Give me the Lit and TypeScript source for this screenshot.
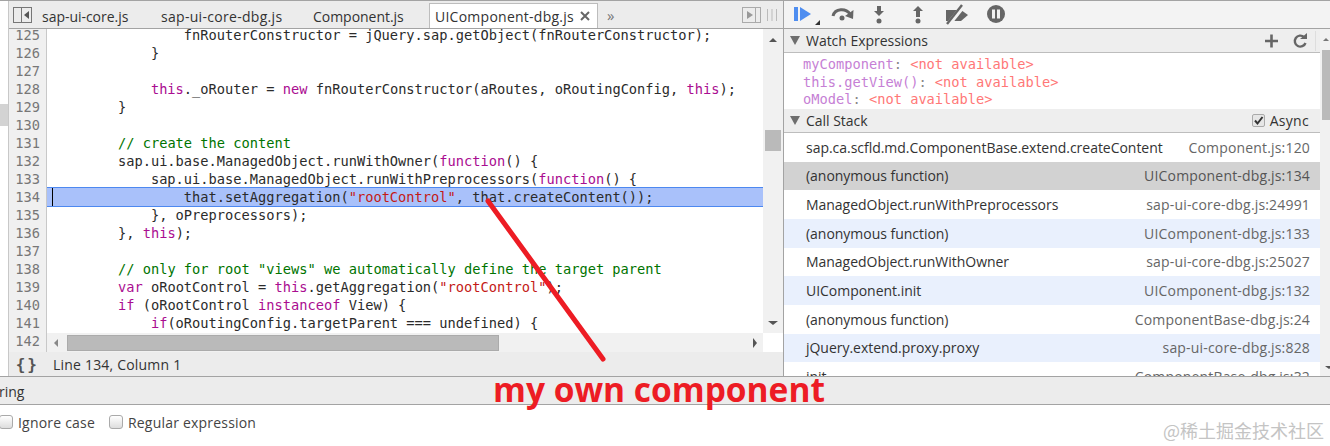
import { LitElement, html, css, svg } from "lit";
import { customElement } from "lit/decorators.js";

type Tok = [string, string?];
const K = "k", S = "s", C = "c";
const lines: Tok[][] = [
  [["                fnRouterConstructor = jQuery.sap.getObject(fnRouterConstructor);"]],
  [["            }"]],
  [[""]],
  [["            "], ["this", K], ["._oRouter = "], ["new", K], [" fnRouterConstructor(aRoutes, oRoutingConfig, "], ["this", K], [");"]],
  [["        }"]],
  [[""]],
  [["        "], ["// create the content", C]],
  [["        sap.ui.base.ManagedObject.runWithOwner("], ["function", K], ["() {"]],
  [["            sap.ui.base.ManagedObject.runWithPreprocessors("], ["function", K], ["() {"]],
  [["                that.setAggregation("], ['"rootControl"', S], [", that.createContent());"]],
  [["            }, oPreprocessors);"]],
  [["        }, "], ["this", K], [");"]],
  [[""]],
  [["        "], ['// only for root "views" we automatically define the target parent', C]],
  [["        "], ["var", K], [" oRootControl = "], ["this", K], [".getAggregation("], ['"rootControl"', S], [");"]],
  [["        "], ["if", K], [" (oRootControl "], ["instanceof", K], [" View) {"]],
  [["            "], ["if", K], ["(oRoutingConfig.targetParent === undefined) {"]],
  [[""]],
];

const stack: [string, string, string][] = [
  ["sap.ca.scfld.md.ComponentBase.extend.createContent", "Component.js:120", ""],
  ["(anonymous function)", "UIComponent-dbg.js:134", "sel"],
  ["ManagedObject.runWithPreprocessors", "sap-ui-core-dbg.js:24991", ""],
  ["(anonymous function)", "UIComponent-dbg.js:133", "alt"],
  ["ManagedObject.runWithOwner", "sap-ui-core-dbg.js:25027", ""],
  ["UIComponent.init", "UIComponent-dbg.js:132", "alt"],
  ["(anonymous function)", "ComponentBase-dbg.js:24", ""],
  ["jQuery.extend.proxy.proxy", "sap-ui-core-dbg.js:828", "alt"],
  ["init", "ComponentBase-dbg.js:32", ""],
];

const watches: [string, string][] = [
  ["myComponent", "<not available>"],
  ["this.getView()", "<not available>"],
  ["oModel", "<not available>"],
];

@customElement("app-root")
export class AppRoot extends LitElement {
  static styles = css`
    :host {
      display: block;
      width: 1330px;
      height: 446px;
      position: relative;
      overflow: hidden;
      background: #fff;
      font-family: "Open Sans", sans-serif;
      font-size: 14px;
      letter-spacing: -0.03px;
      color: #333;
      border-top: 1px solid #a3a3a3;
      box-sizing: border-box;
    }
    .top { display: flex; height: 375px; border-bottom: 1px solid #a3a3a3; box-sizing: content-box; }
    .left { width: 783px; flex: none; display: flex; flex-direction: column; border-right: 1px solid #a3a3a3; }
    .right { flex: 1; min-width: 0; display: flex; flex-direction: column; }

    .sources { flex: 1; min-height: 0; display: flex; }
    .strip { width: 8px; flex: none; border-right: 1px solid #c8c8c8; display: flex; flex-direction: column; }
    .strip i { display: block; height: 22px; margin-top: 103px; background: #d3d3d3; }
    .main { flex: 1; min-width: 0; display: flex; flex-direction: column; }

    .tabbar { height: 27px; flex: none; display: flex; align-items: flex-end; background: #ececec; border-bottom: 1px solid #a3a3a3; position: relative; }
    .tab { height: 25px; line-height: 27px; white-space: nowrap; }
    .tab.active { background: #fff; border: 1px solid #bdbdbd; border-bottom: none; box-sizing: border-box; height: 25px; padding: 0 7px 0 5px; display: flex; align-items: center; width: 169px; margin-left: 24px; justify-content: space-between; letter-spacing: 0.25px; }
    .t1 { margin-left: 33px; width: 119px; }
    .t2 { width: 152px; letter-spacing: 0.3px; }
    .t3 { width: 92px; }
    .tabicon { align-self: center; flex: none; display: block; }
    .lefticon { position: absolute; left: 4px; top: 6px; }
    .chev { margin-left: 9px; align-self: center; color: #777; font-size: 15px; }
    .tabspacer { flex: 1; }
    .barsicon { margin: 0 6px; }

    .editor { flex: 1; min-height: 0; display: flex; }
    .gutter { width: 37px; flex: none; background: #f0f0f0; border-right: 1px solid #c8c8c8; overflow: hidden; color: #777; }
    .codecol { flex: 1; min-width: 0; display: flex; flex-direction: column; }
    .code { height: 304px; flex: none; overflow: hidden; }
    .scrolled { margin-top: -3px; }
    .gutter, .code { font-family: "DejaVu Sans Mono", monospace; font-size: 13.7px; letter-spacing: 0; }
    .num { height: 18px; line-height: 18px; text-align: right; padding-right: 6px; }
    .ln { height: 18px; line-height: 18px; white-space: pre; padding-left: 5px; position: relative; color: #2b2b2b; }
    .ln.cur { background: #a9c1fa; box-shadow: 0 -1px 0 #4d88f0, 0 1px 0 #4d88f0; }
    .caret { position: absolute; left: 5px; top: 0; width: 1px; height: 18px; background: #000; }
    .k { color: #aa0d91; }
    .s { color: #c41a16; }
    .c { color: #007400; }

    .hscroll { flex: 1; background: #f1f1f1; display: flex; align-items: center; position: relative; }
    .harrow-l { width: 0; height: 0; border: 4px solid transparent; border-right: 4px solid #888; border-left: 0; margin-left: 7px; }
    .hthumb { width: 432px; height: 16px; background: #bababa; border: 1px solid #ababab; box-sizing: border-box; margin-left: 9px; }
    .harrow-r { width: 0; height: 0; border: 5px solid transparent; border-left: 4px solid #555; border-right: 0; margin-left: auto; margin-right: 6px; }
    .vcol { width: 20px; flex: none; display: flex; flex-direction: column; }
    .vscroll { height: 304px; background: #f1f1f1; position: relative; display: flex; flex-direction: column; align-items: center; }
    .varrow-u { width: 0; height: 0; border: 4px solid transparent; border-bottom: 4px solid #555; border-top: 0; margin-top: 9px; }
    .vthumb { width: 16px; height: 21px; background: #bababa; margin-top: 88px; }
    .varrow-d { width: 0; height: 0; border: 5px solid transparent; border-top: 4px solid #555; border-bottom: 0; margin-top: auto; margin-bottom: 8px; }

    .status { height: 24px; flex: none; background: #ececec; display: flex; align-items: center; }
    .braces { width: 30px; text-align: right; font-family: "DejaVu Sans Mono", monospace; font-weight: bold; font-size: 16px; color: #555; letter-spacing: 2px; box-sizing: border-box; flex: none; }
    .status span:last-child { margin-left: 14px; letter-spacing: 0.2px; }

    .dtools { height: 27px; flex: none; background: #f3f3f3; border-bottom: 1px solid #a3a3a3; display: flex; align-items: center; }
    .dtools svg { display: block; flex: none; }

    .pane { display: flex; flex: 1; min-height: 0; }
    .pcol { flex: 1; min-width: 0; display: flex; flex-direction: column; overflow: hidden; }
    .phead { height: 23px; flex: none; background: #eee; border-bottom: 1px solid #bdbdbd; display: flex; align-items: center; padding-left: 6px; }
    .tri { width: 0; height: 0; border: 5.5px solid transparent; border-top: 9px solid #6e6e6e; border-bottom: 0; margin-right: 6px; }
    .phead .t { flex: 1; }
    .hicons { display: flex; align-items: center; }
    .check { width: 13px; height: 13px; border: 1px solid #aaa; border-radius: 2px; background: linear-gradient(#fff, #ddd); box-sizing: border-box; display: flex; align-items: center; justify-content: center; flex: none; }
    .check.small { background: #e6e6e6; }
    .phead .async { margin-left: 5px; margin-right: 11px; letter-spacing: 0.3px; }
    .watch { height: 56px; flex: none; background: #fff; padding: 3px 0 0 19px; box-sizing: border-box; font-family: "DejaVu Sans Mono", monospace; font-size: 13.7px; letter-spacing: 0; color: #888; }
    .w { height: 17.5px; line-height: 17.5px; white-space: pre; }
    .w b { font-weight: normal; color: #c67fd5; }
    .w em { font-style: normal; color: #f77; }
    .rows { flex: 1; min-height: 0; overflow: hidden; }
    .row { height: 28.67px; display: flex; align-items: center; justify-content: space-between; padding: 0 10px 0 22px; white-space: nowrap; color: #333; background: #fff; }
    .row.alt { background: #e9f0fd; }
    .row.sel { background: #d2d2d2; }
    .row .loc { color: #666; letter-spacing: 0.17px; }
    .row.sel .loc { color: #555; }
    .pscroll { width: 10px; flex: none; background: #f1f1f1; display: flex; flex-direction: column; align-items: flex-end; }
    .pthumb { width: 8px; height: 70px; background: #bababa; margin-top: 20px; }
    .parrow-u { width: 0; height: 0; border: 3px solid transparent; border-bottom: 3px solid #777; border-top: 0; margin: 9px 1px -11px 0; }
    .parrow-d { width: 0; height: 0; border: 4px solid transparent; border-top: 3px solid #555; border-bottom: 0; margin: auto -3px 7px 0; }

    .search { height: 27px; box-sizing: content-box; background: #ececec; border-bottom: 1px solid #a3a3a3; display: flex; align-items: center; }
    .search span { margin-left: -1px; padding-top: 1px; }
    .opts { display: flex; align-items: center; height: 34px; letter-spacing: 0.2px; }
    .opts .check { margin-left: -1px; width: 14px; height: 14px; border-radius: 3px; }
    .opts span { margin-left: 5px; color: #444; }
    .opts .check + span + .check { margin-left: 14px; }

    .ink { position: absolute; left: 0; top: -1px; pointer-events: none; display: block; }
    .note { position: absolute; left: 493px; top: 365px; font-family: "Open Sans", sans-serif; font-weight: 700; font-size: 33.5px; letter-spacing: 0; line-height: 46px; color: #ed1c24; white-space: nowrap; }
    .mark { position: absolute; right: 6px; bottom: 3px; font-family: "Noto Sans CJK SC", sans-serif; font-size: 18px; letter-spacing: 0; line-height: 26px; color: #c4c4c4; white-space: nowrap; }
  `;

  private toolbar() {
    return html`<svg width="546" height="27" viewBox="0 0 546 27">
      ${svg`
      <rect x="10" y="6" width="4" height="14" fill="#4e8df0"/>
      <path d="M16 6 L27 13 L16 20 Z" fill="#4e8df0"/>
      <path d="M31 24 L36 24 L36 19 Z" fill="#333"/>
      <path d="M49 15 C51 7 62 7 66 13" fill="none" stroke="#666" stroke-width="3"/>
      <path d="M69.5 9 L69 18 L61 15 Z" fill="#666"/>
      <circle cx="58" cy="17" r="2.5" fill="#666"/>
      <rect x="93" y="5" width="4" height="6" fill="#666"/>
      <path d="M90 10 L100 10 L95 15 Z" fill="#666"/>
      <circle cx="95" cy="20" r="2.5" fill="#666"/>
      <path d="M129 10 L139 10 L134 5 Z" fill="#666"/>
      <rect x="132" y="10" width="4" height="6" fill="#666"/>
      <circle cx="134" cy="20" r="2.5" fill="#666"/>
      <path d="M162 9 L177 9 L184 14 L177 20 L162 20 Z" fill="#666"/>
      <path d="M180 4 L164 24" stroke="#f3f3f3" stroke-width="5"/>
      <path d="M178 4 L163 23" stroke="#666" stroke-width="2.4"/>
      <circle cx="212" cy="13" r="9" fill="#666"/>
      <rect x="208" y="8.5" width="3" height="9" fill="#f3f3f3"/>
      <rect x="213" y="8.5" width="3" height="9" fill="#f3f3f3"/>
      `}
    </svg>`;
  }

  render() {
    return html`
      <div class="top">
        <div class="left">
          <div class="sources">
            <div class="strip"><i></i></div>
            <div class="main">
              <div class="tabbar">
                <svg class="tabicon lefticon" width="19" height="16" viewBox="0 0 19 16">
                  <rect x="0.5" y="0.5" width="18" height="15" fill="none" stroke="#777"/>
                  <rect x="8" y="1" width="1" height="14" fill="#777"/>
                  <path d="M16 4 L11 8 L16 12 Z" fill="#555"/>
                </svg>
                <div class="tab t1">sap-ui-core.js</div>
                <div class="tab t2">sap-ui-core-dbg.js</div>
                <div class="tab t3">Component.js</div>
                <div class="tab active">
                  <span>UIComponent-dbg.js</span>
                  <svg width="10" height="10" viewBox="0 0 10 10"><path d="M1 1 L9 9 M9 1 L1 9" stroke="#666" stroke-width="2"/></svg>
                </div>
                <div class="chev">»</div>
                <div class="tabspacer"></div>
                <svg class="tabicon" width="19" height="16" viewBox="0 0 19 16">
                  <rect x="0.5" y="0.5" width="18" height="15" fill="none" stroke="#aaa"/>
                  <rect x="13" y="1" width="1" height="14" fill="#aaa"/>
                  <path d="M5 4 L11 8 L5 12 Z" fill="#999"/>
                </svg>
                <svg class="tabicon barsicon" width="10" height="12" viewBox="0 0 10 12">
                  <path d="M0.5 0 V12 M5 0 V12 M9.5 0 V12" stroke="#bbb"/>
                </svg>
              </div>
              <div class="editor">
                <div class="gutter"><div class="scrolled">
                  ${lines.map((_, i) => html`<div class="num">${125 + i}</div>`)}
                </div></div>
                <div class="codecol">
                  <div class="code"><div class="scrolled">
                    ${lines.map((l, i) => html`<div class="ln ${i === 9 ? "cur" : ""}">${i === 9 ? html`<i class="caret"></i>` : ""}${l.map(
                      ([t, c]) => (c ? html`<span class="${c}">${t}</span>` : t)
                    )}</div>`)}
                  </div></div>
                  <div class="hscroll"><i class="harrow-l"></i><div class="hthumb"></div><i class="harrow-r"></i></div>
                </div>
                <div class="vcol">
                  <div class="vscroll"><i class="varrow-u"></i><div class="vthumb"></div><i class="varrow-d"></i></div>
                </div>
              </div>
              <div class="status"><span class="braces">{}</span><span>Line 134, Column 1</span></div>
            </div>
          </div>
        </div>
        <div class="right">
          <div class="dtools">${this.toolbar()}</div>
          <div class="pane">
            <div class="pcol">
              <div class="phead">
                <i class="tri"></i><span class="t">Watch Expressions</span>
                <div class="hicons">
                  <svg width="55" height="20" viewBox="0 0 55 20">
                    <path d="M0 10 H13 M6.5 3.5 V16.5" stroke="#666" stroke-width="2.6"/>
                    <path d="M39 6 A5.5 5.5 0 1 0 40.5 12" fill="none" stroke="#666" stroke-width="2.4"/>
                    <path d="M35 8 L42 8 L42 2 Z" fill="#666"/>
                    <path d="M50.5 0 V20" stroke="#ddd"/>
                  </svg>
                </div>
              </div>
              <div class="watch">
                ${watches.map(([n, v]) => html`<div class="w"><b>${n}</b>: <em>${v}</em></div>`)}
              </div>
              <div class="phead">
                <i class="tri"></i><span class="t">Call Stack</span>
                <div class="check small">
                  <svg width="11" height="11" viewBox="0 0 11 11"><path d="M2 5.5 L4.5 8.5 L9.5 2" fill="none" stroke="#333" stroke-width="2"/></svg>
                </div>
                <span class="async">Async</span>
              </div>
              <div class="rows">
                ${stack.map(([f, l, c]) => html`<div class="row ${c}"><span>${f}</span><span class="loc">${l}</span></div>`)}
              </div>
            </div>
            <div class="pscroll"><i class="parrow-u"></i><div class="pthumb"></div><i class="parrow-d"></i></div>
          </div>
        </div>
      </div>
      <div class="search"><span>ring</span></div>
      <div class="opts">
        <i class="check"></i><span>Ignore case</span>
        <i class="check"></i><span>Regular expression</span>
      </div>
      <svg class="ink" width="1330" height="446" viewBox="0 0 1330 446">
        <path d="M488 201 L603 359" stroke="#ed1c24" stroke-width="5" stroke-linecap="round"/>
      </svg>
      <div class="note">my own component</div>
      <div class="mark">@稀土掘金技术社区</div>
    `;
  }
}
